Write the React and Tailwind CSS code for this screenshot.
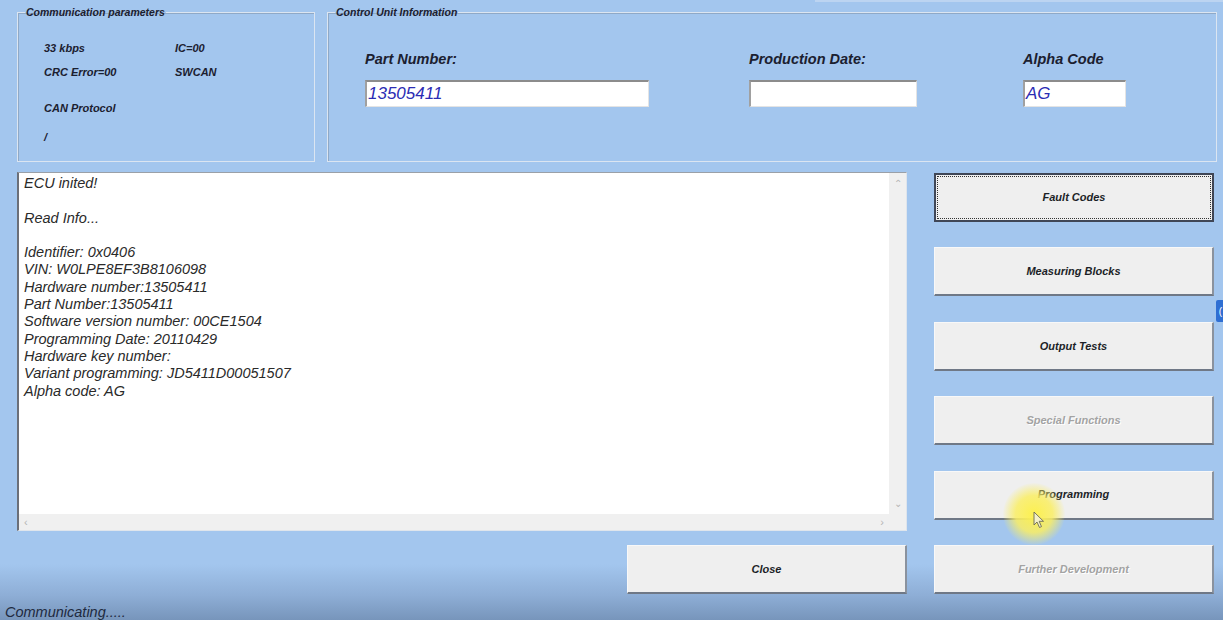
import React from "react";

const logLines = [
  "ECU inited!",
  "",
  "Read Info...",
  "",
  "Identifier: 0x0406",
  "VIN: W0LPE8EF3B8106098",
  "Hardware number:13505411",
  "Part Number:13505411",
  "Software version number: 00CE1504",
  "Programming Date: 20110429",
  "Hardware key number:",
  "Variant programming: JD5411D00051507",
  "Alpha code: AG",
];

const sideButtons = [
  { label: "Fault Codes", focused: true },
  { label: "Measuring Blocks" },
  { label: "Output Tests" },
  { label: "Special Functions", disabled: true },
  { label: "Programming" },
  { label: "Further Development", disabled: true },
];

const GroupBox = ({ title, className, children }) => (
  <fieldset
    className={`border border-[#dbe5f1] shadow-[inset_1px_1px_0_#8fa9c7] h-[156px] ${className}`}
  >
    <legend className="ml-[7px] px-[1px] text-[10.5px] leading-[12px] font-bold text-[#1b2030]">
      {title}
    </legend>
    {children}
  </fieldset>
);

const WinButton = ({ label, focused, disabled, className = "" }) => (
  <button
    className={`relative w-[280px] h-[49px] bg-[#efefef] text-[11px] font-bold italic flex items-center justify-center ${
      focused
        ? "border-2 border-[#3f4656]"
        : "border border-t-[#f8f8f8] border-l-[#f8f8f8] border-b-2 border-r-2 border-b-[#6f7886] border-r-[#8a929e]"
    } ${
      disabled
        ? "text-[#a3a3a3] [text-shadow:1px_1px_0_#ffffff]"
        : "text-[#1c1f27]"
    } ${className}`}
  >
    {focused && (
      <span className="absolute inset-[1px] border border-dotted border-[#333]" />
    )}
    {label}
  </button>
);

const TextField = ({ value, className }) => (
  <div
    className={`h-[27px] bg-white border-t-2 border-l-2 border-t-[#8c8c8c] border-l-[#a0a0a0] border-b border-r border-b-[#e4e4e4] border-r-[#e4e4e4] px-[1px] text-[17px] leading-[24px] text-[#2b2cb4] ${className}`}
  >
    {value}
  </div>
);

export default function App() {
  return (
    <div className="relative w-[1223px] h-[620px] overflow-hidden bg-[linear-gradient(to_bottom,#a3c6ee_0%,#a3c6ee_91%,#8eaed6_96%,#7795bb_100%)] font-['Liberation_Sans',Arial,sans-serif] italic text-[#1b2030] flex flex-col">
      {/* top strip */}
      <div className="absolute top-0 left-[815px] right-0 h-[2px] bg-[#bcd4f1]" />

      {/* Group boxes */}
      <div className="flex gap-[12px] pl-[17px] pt-[6px]">
        <GroupBox title="Communication parameters" className="w-[298px]">
          <div className="pl-[26px] text-[11px] leading-[12px] font-bold">
            <div className="grid grid-cols-[131px_auto] gap-y-[12px] mt-[24px]">
              <span>33 kbps</span>
              <span>IC=00</span>
              <span>CRC Error=00</span>
              <span>SWCAN</span>
            </div>
            <div className="mt-[24px]">CAN Protocol</div>
            <div className="mt-[17px]">/</div>
          </div>
        </GroupBox>

        <GroupBox title="Control Unit Information" className="w-[890px]">
          <div className="flex pl-[37px] mt-[33px] font-bold">
            <div className="w-[284px]">
              <div className="text-[14.5px] leading-[16px]">Part Number:</div>
              <TextField value="13505411" className="mt-[13px] w-[284px] font-normal" />
            </div>
            <div className="w-[168px] ml-[100px]">
              <div className="text-[14.5px] leading-[16px]">Production Date:</div>
              <TextField value="" className="mt-[13px] w-[168px] font-normal" />
            </div>
            <div className="w-[103px] ml-[106px]">
              <div className="text-[14.5px] leading-[16px]">Alpha Code</div>
              <TextField value="AG" className="mt-[13px] w-[103px] font-normal" />
            </div>
          </div>
        </GroupBox>
      </div>

      {/* Main area */}
      <div className="flex gap-[27px] pl-[17px] mt-[10px]">
        <div className="w-[890px] flex flex-col">
          <div className="h-[359px] bg-white border-t border-t-[#9aa0a8] border-l-2 border-l-[#6b6f78] border-r border-r-[#dfe5ec] border-b border-b-[#dfe5ec] flex flex-col">
            <div className="flex flex-1 min-h-0">
              <div className="flex-1 pl-[5px] pt-[2px] text-[14.5px] leading-[17.3px] text-[#2a2a2a]">
                {logLines.map((line, i) => (
                  <div key={i} className="h-[17.3px] whitespace-pre">
                    {line}
                  </div>
                ))}
              </div>
              <div className="w-[17px] bg-[#f0f0f0] flex flex-col items-center justify-between py-[3px] not-italic text-[10px] text-[#b5b5b5]">
                <span>&#8963;</span>
                <span>&#8964;</span>
              </div>
            </div>
            <div className="h-[16px] flex">
              <div className="flex-1 bg-[#f0f0f0] flex items-center justify-between px-[5px] not-italic text-[11px] text-[#b5b5b5]">
                <span>&#8249;</span>
                <span>&#8250;</span>
              </div>
              <div className="w-[17px] bg-[#f0f0f0]" />
            </div>
          </div>
          <div className="flex justify-end mt-[14px]">
            <WinButton label="Close" className="font-bold" />
          </div>
        </div>

        <div className="w-[280px] flex flex-col gap-[25.4px] pt-[1px]">
          {sideButtons.map((b) => (
            <WinButton key={b.label} {...b} />
          ))}
        </div>
      </div>

      {/* Status */}
      <div className="mt-auto pl-[5px] text-[14.5px] leading-[16px] text-[#1e2a40] h-[16px]">
        Communicating.....
      </div>

      {/* blue side tab */}
      <div className="absolute right-0 top-[300px] w-[7px] h-[22px] bg-[#2f6fd3] rounded-l-[2px] flex items-center justify-end pr-[1px] not-italic text-[10px] text-white">
        (
      </div>

      {/* cursor highlight */}
      <div className="absolute left-[1003px] top-[483px] w-[62px] h-[62px] rounded-full bg-[radial-gradient(circle,rgba(252,240,80,1)_0%,rgba(250,238,100,0.85)_42%,rgba(248,236,110,0)_72%)] pointer-events-none" />
      <svg
        className="absolute left-[1033px] top-[511px] pointer-events-none"
        width="12"
        height="18"
        viewBox="0 0 12 18"
      >
        <path
          d="M1 1 L1 14 L4 11 L6.5 16.5 L8.5 15.6 L6.2 10.3 L10.5 10.3 Z"
          fill="#f4f0c8"
          stroke="#6a6a55"
          strokeWidth="0.9"
        />
      </svg>
    </div>
  );
}
